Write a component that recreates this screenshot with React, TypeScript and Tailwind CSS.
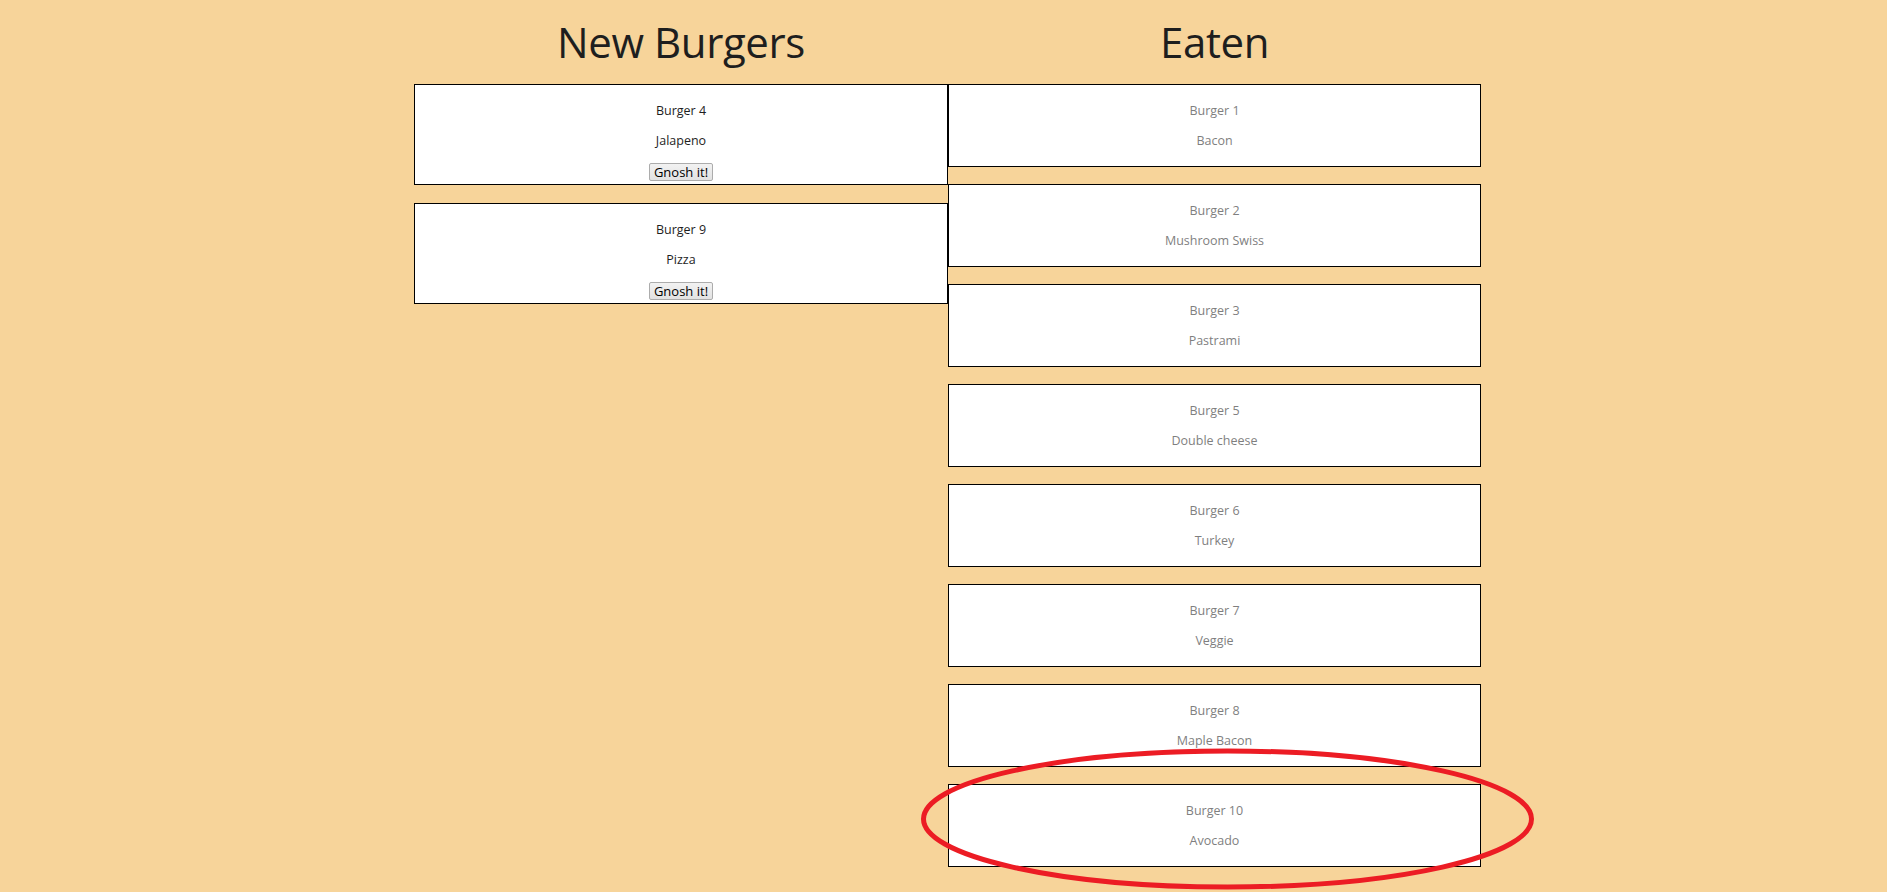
const fresh = [
  { name: "Burger 4", topping: "Jalapeno" },
  { name: "Burger 9", topping: "Pizza" },
];

const eaten = [
  { name: "Burger 1", topping: "Bacon" },
  { name: "Burger 2", topping: "Mushroom Swiss" },
  { name: "Burger 3", topping: "Pastrami" },
  { name: "Burger 5", topping: "Double cheese" },
  { name: "Burger 6", topping: "Turkey" },
  { name: "Burger 7", topping: "Veggie" },
  { name: "Burger 8", topping: "Maple Bacon" },
  { name: "Burger 10", topping: "Avocado" },
];

function Heading({ children }: { children: string }) {
  return (
    <h1 className="mt-[12px] mb-[13px] text-center text-[42px] leading-[59px] font-normal tracking-[-0.4px] text-[#1e1e1e]">
      {children}
    </h1>
  );
}

export default function App() {
  return (
    <div className="relative min-h-screen bg-[#f7d49a] font-['Open_Sans',sans-serif]">
      <div className="ml-[414px] grid grid-cols-[534px_533px] items-start">
        <section>
          <Heading>New Burgers</Heading>
          {fresh.map((b) => (
            <div
              key={b.name}
              className="mb-[18px] flex flex-col items-center border border-black bg-white pt-[5px] pb-[3px] text-[12.5px] text-[#1e1e1e]"
            >
              <p className="mt-[12px] leading-[18px]">{b.name}</p>
              <p className="mt-[12px] leading-[18px]">{b.topping}</p>
              <button className="mt-[13px] flex h-[18px] items-center rounded-[2px] border border-[#acacac] bg-gradient-to-b from-[#f2f2f2] to-[#e2e2e2] px-[4px] text-[13px] leading-none text-black">
                Gnosh it!
              </button>
            </div>
          ))}
        </section>

        <section>
          <Heading>Eaten</Heading>
          {eaten.map((b) => (
            <div
              key={b.name}
              className="mb-[17px] flex h-[83px] flex-col items-center border border-black bg-white pt-[5px] text-[12.5px] text-[#7f7f7f]"
            >
              <p className="mt-[12px] leading-[18px]">{b.name}</p>
              <p className="mt-[12px] leading-[18px]">{b.topping}</p>
            </div>
          ))}
        </section>
      </div>

      {/* red marker circled on the last eaten burger */}
      <svg className="pointer-events-none absolute top-[745px] left-[918px]" width="620" height="147" viewBox="0 0 620 147">
        <ellipse cx="309.5" cy="74" rx="304" ry="68" fill="none" stroke="#ec1c24" strokeWidth="5" />
      </svg>
    </div>
  );
}
